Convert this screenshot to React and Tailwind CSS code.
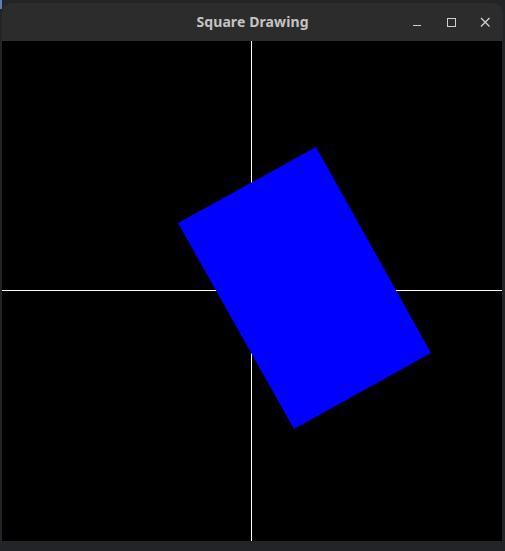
export default function App() {
  return (
    <div className="w-[505px] h-[551px] bg-[#232427] overflow-hidden relative" style={{ fontFamily: '"Noto Sans", "DejaVu Sans", sans-serif' }}>
      <div className="absolute left-0 top-0 w-[2px] h-[9px] bg-[#5b7fb0]" />
      <div className="ml-[2px] mt-[3px] w-[501px] flex flex-col">
        <div className="h-[38px] rounded-t-[10px] bg-[#2c2c2c] relative flex items-center justify-center">
          <span className="text-[14px] font-bold text-[#c4c4c4] leading-none tracking-[0.1px]">Square Drawing</span>
          <div className="absolute right-0 top-0 h-full flex items-center">
            <div className="w-[34px] h-full flex items-center justify-center">
              <svg width="12" height="12" viewBox="0 0 12 12"><rect x="2" y="9" width="8" height="1" fill="#d0d0d0" /></svg>
            </div>
            <div className="w-[34px] h-full flex items-center justify-center">
              <svg width="12" height="12" viewBox="0 0 12 12"><rect x="2.5" y="2.5" width="8" height="8" fill="none" stroke="#d0d0d0" strokeWidth="1" /></svg>
            </div>
            <div className="w-[34px] h-full flex items-center justify-center mr-[1px]">
              <svg width="12" height="12" viewBox="0 0 12 12"><path d="M2 2 L10.5 10.5 M10.5 2 L2 10.5" stroke="#d0d0d0" strokeWidth="1.3" /></svg>
            </div>
          </div>
        </div>
        <div className="w-[500px] h-[500px] bg-black">
          <svg width="500" height="500" viewBox="0 0 500 500">
            <rect x="249" y="0" width="1" height="500" fill="#ffffff" />
            <rect x="0" y="249" width="500" height="1" fill="#ffffff" />
            <polygon points="314,106 429,312 292,388 176,182" fill="#0000ff" />
          </svg>
        </div>
      </div>
    </div>
  );
}
